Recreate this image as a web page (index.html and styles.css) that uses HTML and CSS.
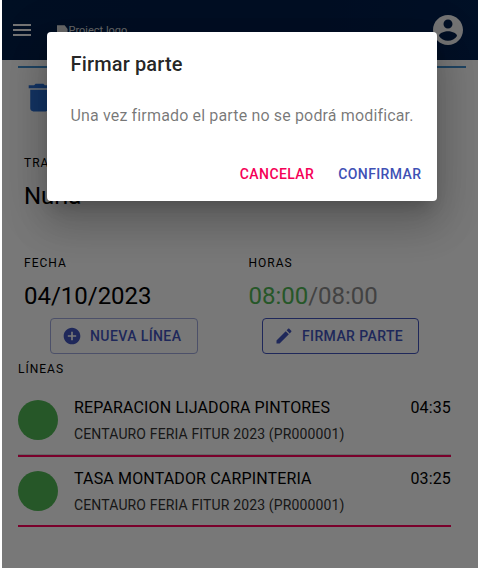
FILE: index.html
```html
<!DOCTYPE html>
<html lang="es">
<head>
<meta charset="utf-8">
<title>Parte</title>
<link rel="stylesheet" href="styles.css">
</head>
<body>
<div class="page">
  <header class="appbar">
    <svg class="menu" viewBox="0 0 24 24"><path d="M3 18h18v-2H3v2zm0-5h18v-2H3v2zm0-7v2h18V6H3z"/></svg>
    <div class="logo">
      <svg class="broken" viewBox="0 0 12 12"><path d="M0 0h8l3 4v6l-4-1-3 3H0z"/></svg>
      <span>Project logo</span>
    </div>
    <svg class="account" viewBox="0 0 24 24"><path d="M12 2C6.480 2 2 6.480 2 12s4.480 10 10 10 10-4.480 10-10S17.520 2 12 2zm0 3c1.660 0 3 1.340 3 3s-1.340 3-3 3-3-1.340-3-3 1.340-3 3-3zm0 14.200c-2.500 0-4.710-1.280-6-3.220.030-1.990 4-3.080 6-3.080 1.990 0 5.970 1.090 6 3.080-1.290 1.940-3.500 3.220-6 3.220z"/></svg>
  </header>
  <main class="content">
    <div class="toolbar">
      <svg class="trash" viewBox="0 0 24 24"><path d="M6 19c0 1.100.900 2 2 2h8c1.100 0 2-.900 2-2V7H6v12zM19 4h-3.500l-1-1h-5l-1 1H5v2h14V4z"/></svg>
    </div>
    <section class="field worker">
      <div class="overline">TRABAJADOR</div>
      <div class="value">Nuria</div>
    </section>
    <div class="columns">
      <section class="field">
        <div class="overline">FECHA</div>
        <div class="value">04/10/2023</div>
      </section>
      <section class="field">
        <div class="overline">HORAS</div>
        <div class="value muted"><span class="done">08:00</span>/08:00</div>
      </section>
    </div>
    <div class="buttons">
      <button class="btn outlined soft"><svg viewBox="0 0 24 24"><path d="M12 2C6.480 2 2 6.480 2 12s4.480 10 10 10 10-4.480 10-10S17.520 2 12 2zm5 11h-4v4h-2v-4H7v-2h4V7h2v4h4v2z"/></svg>NUEVA LÍNEA</button>
      <button class="btn outlined"><svg viewBox="0 0 24 24"><path d="M3 17.250V21h3.750L17.810 9.940l-3.750-3.750L3 17.250zM20.710 7.040c.390-.390.390-1.020 0-1.410l-2.340-2.340c-.390-.390-1.020-.390-1.410 0l-1.830 1.830 3.750 3.750 1.830-1.830z"/></svg>FIRMAR PARTE</button>
    </div>
    <div class="overline lines-title">LÍNEAS</div>
    <ul class="lines">
      <li class="line divided">
        <span class="dot"></span>
        <div class="text"><div class="primary">REPARACION LIJADORA PINTORES</div><div class="secondary">CENTAURO FERIA FITUR 2023 (PR000001)</div></div>
        <div class="time">04:35</div>
      </li>
      <li class="line">
        <span class="dot"></span>
        <div class="text"><div class="primary">TASA MONTADOR CARPINTERIA</div><div class="secondary">CENTAURO FERIA FITUR 2023 (PR000001)</div></div>
        <div class="time">03:25</div>
      </li>
    </ul>
  </main>
  <div class="backdrop">
    <div class="dialog" role="dialog">
      <h2 class="dialog-title">Firmar parte</h2>
      <p class="dialog-text">Una vez firmado el parte no se podrá modificar.</p>
      <div class="dialog-actions">
        <button class="btn cancel">CANCELAR</button>
        <button class="btn">CONFIRMAR</button>
      </div>
    </div>
  </div>
</div>
</body>
</html>
```
FILE: styles.css
```css
* { box-sizing: border-box; }
body {
  margin: 0;
  padding-left: 2px;
  background: #fff;
  font-family: Roboto, "Liberation Sans", sans-serif;
  color: #000;
  overflow: hidden;
}
svg { display: block; fill: currentColor; flex: none; }
.page { position: relative; height: 568px; background: #f0f0f0; overflow: hidden; }

.appbar {
  display: flex;
  align-items: center;
  height: 60px;
  padding: 0 12px 0 8px;
  background: linear-gradient(100deg, #001e46, #001c46 60%, #00204c);
  color: #e8e8e8;
}
.menu { width: 24px; height: 24px; }
.logo {
  display: flex;
  align-items: center;
  flex: 1;
  margin: 1px 0 0 23px;
  font-size: 11px;
  line-height: 14px;
  color: #d0d0d0;
}
.broken { width: 11.500px; height: 12px; }
.account { width: 36px; height: 36px; }

.content { padding: 6px 12px 0 16px; }
.toolbar { height: 81px; border-top: 2px solid #3f88c4; padding: 11px 0 0 3px; }
.trash { width: 37px; height: 37px; color: #2668c8; }
.field { height: 64px; }
.worker { margin: 0 0 36px 6px; }
.columns { display: grid; grid-template-columns: 224.500px 1fr; padding-left: 6px; }
.overline { font-size: 12px; line-height: 32px; letter-spacing: 1px; }
.value { padding-top: 1px; font-size: 24px; line-height: 32px; letter-spacing: -0.02px; white-space: nowrap; }
.muted { color: #858585; }
.done { color: #4caf50; }

.btn {
  display: flex;
  align-items: center;
  height: 36px;
  padding: 0 8px;
  border: 0;
  border-radius: 4px;
  background: none;
  font: 500 14px/24px Roboto, "Liberation Sans", sans-serif;
  letter-spacing: 0.4px;
  color: #3f51b5;
  white-space: nowrap;
}
.buttons { display: flex; gap: 64px; margin: 7px 0 0 32px; height: 36px; }
.outlined { border: 1px solid #3f51b5; padding: 0 15px 0 11px; }
.outlined svg { width: 20px; height: 20px; margin-right: 8px; }
.soft { border-color: #98a1d2; padding-right: 15.600px; }

.lines-title { margin-top: -1px; }
.lines { list-style: none; margin: 1px 15px 0 0; padding: 0; }
.line {
  display: flex;
  height: 70px;
  border-bottom: 2px solid #f50057;
}
.divided { height: 71px; box-shadow: inset 0 -1px #cacaca; }
.dot { width: 40px; height: 40px; margin: 14px 16px 0 0; border-radius: 50%; background: #4caf50; }
.text { flex: 1; padding-top: 10px; }
.primary, .time { font-size: 16px; line-height: 24px; letter-spacing: 0.15px; }
.secondary { margin-top: 4px; font-size: 14px; line-height: 20px; letter-spacing: 0.14px; color: #303030; }
.time { padding-top: 10px; }

.backdrop {
  position: absolute;
  inset: 0;
  display: flex;
  align-items: flex-start;
  padding: 32px 41px 0 45px;
  background: rgba(0, 0, 0, 0.5);
}
.dialog {
  width: 390px;
  height: 169px;
  border-radius: 4px;
  background: #fff;
  box-shadow: 0 11px 15px -7px rgba(0, 0, 0, 0.2), 0 24px 38px 3px rgba(0, 0, 0, 0.14), 0 9px 46px 8px rgba(0, 0, 0, 0.12);
}
.dialog-title {
  margin: 0;
  padding: 16px 23.500px;
  font-size: 20px;
  line-height: 32px;
  font-weight: 500;
  letter-spacing: 0.15px;
  color: rgba(0, 0, 0, 0.87);
}
.dialog-text {
  margin: 0;
  padding: 8px 23.500px;
  height: 52px;
  font-size: 16px;
  line-height: 24px;
  letter-spacing: 0.15px;
  color: rgba(0, 0, 0, 0.54);
  white-space: nowrap;
}
.dialog-actions { display: flex; justify-content: flex-end; gap: 8px; padding: 8px 7.500px; }
.cancel { color: #f50057; }
```
